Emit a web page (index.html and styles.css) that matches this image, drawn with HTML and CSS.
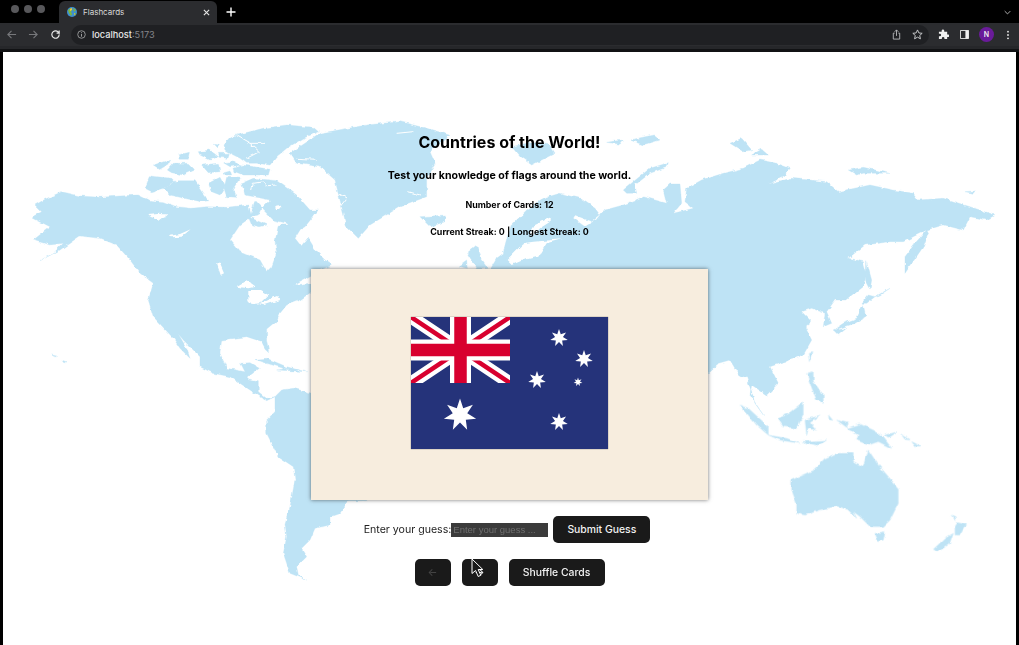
FILE: index.html
```html
<!DOCTYPE html>
<html lang="en">
<head>
<meta charset="utf-8">
<title>Flashcards</title>
<link rel="stylesheet" href="styles.css">
</head>
<body>
<header class="browser">
  <div class="tabstrip">
    <div class="lights"><i></i><i></i><i></i></div>
    <div class="tab">
      <svg class="fav" viewBox="0 0 10 10"><circle cx="5" cy="5" r="5" fill="#3f8fd0"/><path d="M1 3 4 1l1 2-1 2 1 2-1 2-2-3zM6 1l3 2-2 2zM7 6l2 0-1 3z" fill="#7fb53c"/><path d="M3 2 5 1 5 3 3 4zM7 6l1 1-1 1z" fill="#f0c93a"/></svg>
      <span class="tabtitle">Flashcards</span>
      <svg class="tabx" viewBox="0 0 8 8"><path d="M1 1 7 7M7 1 1 7" stroke="#e6e6e6" stroke-width="1.3"/></svg>
    </div>
    <svg class="plus" viewBox="0 0 10 10"><path d="M5 .5v9M.5 5h9" stroke="#fff" stroke-width="1.4"/></svg>
    <svg class="chev" viewBox="0 0 10 6"><path d="M1 1 5 5 9 1" fill="none" stroke="#ccc" stroke-width="1.2"/></svg>
  </div>
  <div class="toolbar">
    <svg class="tool" viewBox="0 0 12 12"><path d="M11 6H2M6 2 2 6l4 4" fill="none" stroke="#77787b" stroke-width="1.2"/></svg>
    <svg class="tool" viewBox="0 0 12 12"><path d="M1 6h9M6 2l4 4-4 4" fill="none" stroke="#77787b" stroke-width="1.2"/></svg>
    <svg class="tool" viewBox="0 0 12 12"><path d="M10 6a4 4 0 1 1-1.2-2.8L10 4.4V1.5M10 4.4H7.2" fill="none" stroke="#e8e8e8" stroke-width="1.3"/></svg>
    <div class="omnibox">
      <svg class="info" viewBox="0 0 10 10"><circle cx="5" cy="5" r="4.2" fill="none" stroke="#a8a9ab" stroke-width=".9"/><path d="M5 4.4v3M5 2.5v1" stroke="#a8a9ab" stroke-width="1"/></svg>
      <span class="host">localhost</span><span class="port">:5173</span>
      <div class="omni-end">
        <svg class="omni-icon" viewBox="0 0 10 12"><path d="M3 4.5H1.5v6.5h7V4.5H7M5 7.5V1M3 3l2-2 2 2" fill="none" stroke="#b8b9bb" stroke-width="1"/></svg>
        <svg class="omni-icon" viewBox="0 0 12 12"><path d="M6 1l1.5 3.3 3.6.4-2.7 2.4.8 3.6L6 8.9l-3.2 1.8.8-3.6L.9 4.7l3.6-.4z" fill="none" stroke="#d0d1d3" stroke-width="1"/></svg>
      </div>
    </div>
    <svg class="ext" viewBox="0 0 12 12"><path d="M1 3h3V2a1.4 1.4 0 0 1 2.8 0v1H10v3h1a1.4 1.4 0 0 1 0 2.8h-1V11H7V10a1.4 1.4 0 0 0-2.8 0v1H1V8h1a1.4 1.4 0 0 0 0-2.8H1z" fill="#f0f0f0"/></svg>
    <svg class="side" viewBox="0 0 10 10"><path d="M.5.5h9v9h-9z" fill="none" stroke="#f0f0f0" stroke-width="1"/><path d="M6 .5h3.5v9H6z" fill="#f0f0f0"/></svg>
    <div class="avatar">N</div>
    <svg class="dots" viewBox="0 0 4 12"><circle cx="2" cy="2" r="1.1" fill="#e8e8e8"/><circle cx="2" cy="6" r="1.1" fill="#e8e8e8"/><circle cx="2" cy="10" r="1.1" fill="#e8e8e8"/></svg>
  </div>
</header>

<main class="page">
  <svg class="map" viewBox="3 52 1013 593" aria-hidden="true">
    <defs>
      <filter id="coast" x="0" y="0" width="100%" height="100%" filterUnits="userSpaceOnUse" primitiveUnits="userSpaceOnUse">
        <feTurbulence type="fractalNoise" baseFrequency="0.16" numOctaves="2" seed="4"/>
        <feDisplacementMap in="SourceGraphic" scale="4" xChannelSelector="R" yChannelSelector="G"/>
      </filter>
    </defs>
    <g class="world">
    <g class="land" transform="translate(0 110) scale(.33333)">
      <!-- North America -->
      <polygon points="97,320 125,305 105,285 135,268 185,245 240,258 300,262 360,258 415,255 445,270 490,275 530,290 575,295 620,290 680,292 745,285 755,320 720,345 690,390 720,425 780,450 800,485 815,470 830,430 825,395 835,345 870,345 900,360 885,385 905,410 925,385 950,425 975,450 998,465 960,480 935,495 880,525 935,520 935,545 900,570 860,585 840,610 830,635 800,660 800,690 806,725 795,715 785,695 740,680 665,690 660,730 680,775 735,785 722,760 750,758 778,775 745,800 745,810 775,815 775,845 800,865 825,860 800,872 750,840 690,800 640,790 600,770 600,740 550,690 535,672 560,715 570,745 540,715 520,685 460,620 445,570 460,520 420,490 390,450 350,405 300,385 240,378 215,395 180,420 120,452 160,430 190,400 150,405 100,390 150,350 100,325"/>
      <polygon points="745,320 800,345 780,350 755,345"/>
      <!-- Greenland -->
      <polygon points="870,130 960,70 1100,45 1200,35 1280,55 1350,75 1290,125 1305,160 1280,200 1280,260 1200,290 1110,345 1075,385 1040,350 1020,270 1005,210 960,170 890,160"/>
      <polygon points="1260,320 1340,315 1335,335 1290,350"/>
      <!-- Britain -->
      <polygon points="1375,468 1400,450 1402,475"/>
      <polygon points="1400,430 1430,405 1440,440 1465,475 1430,478"/>
      <polygon points="1490,475 1510,440 1530,440 1530,480"/>
      <!-- Cuba etc -->
      <polygon points="765,748 800,745 860,770 895,780 850,775 800,760"/>
      <polygon points="830,780 870,775 920,785 870,782"/>
      <polygon points="155,735 170,738 165,741"/>
      <polygon points="185,750 198,755 192,759"/>
      <!-- South America -->
      <polygon points="825,860 845,840 880,835 935,850 1100,900 1100,1172 1045,1172 1020,1210 990,1220 990,1245 945,1255 930,1290 905,1315 920,1340 890,1370 895,1395 920,1410 870,1390 850,1330 860,1280 855,1240 870,1190 885,1110 880,1070 835,1040 800,970 800,930 825,905"/>
    </g>
    <g class="white" transform="translate(0 110) scale(.33333)">
      <polygon points="710,530 740,512 765,530 745,535"/>
      <polygon points="745,540 780,540 805,555 780,580 755,582 745,570"/>
      <polygon points="780,582 830,558 838,570 790,586"/>
      <polygon points="445,312 480,308 500,318 470,325 475,332 455,322"/>
      <polygon points="508,378 540,372 572,358 545,380 515,382"/>
      <polygon points="650,460 660,462 672,490 662,495"/>
      <polyline class="chan" points="890,145 950,148"/>
      <polyline class="chan" points="1190,70 1240,65"/>
      <polyline class="chan" points="1225,245 1260,255"/>
      <polyline class="chan" points="1015,250 1040,265 1020,290"/>
    </g>
    <!-- Arctic Canada -->
    <g class="land" transform="translate(130 120) scale(.33333)">
      <polygon points="282,75 300,55 320,45 400,25 470,15 550,22 565,35 520,55 470,85 440,110 420,135 380,130 350,130 330,115 300,100 285,90"/>
      <polygon points="70,135 125,118 120,130 90,148"/>
      <polygon points="145,105 178,97 175,118 148,118"/>
      <polygon points="112,150 130,130 175,130 195,150 160,165 125,158"/>
      <polygon points="205,95 240,90 265,110 240,120 210,105"/>
      <polygon points="265,100 295,100 290,115 270,112"/>
      <polygon points="215,135 265,130 270,155 235,158"/>
      <polygon points="280,128 305,125 335,135 300,140"/>
      <polygon points="312,145 340,135 420,148 415,165 340,165 315,155"/>
      <polygon points="282,155 300,150 305,165 285,165"/>
      <polygon points="250,70 265,72 260,80"/>
      <polygon points="45,205 60,168 125,175 135,185 100,205 65,215"/>
      <polygon points="100,205 145,182 195,182 218,215 238,242 210,245 150,232 120,225"/>
      <polygon points="235,190 270,172 285,200 270,225 245,215"/>
      <polygon points="290,172 330,175 310,205 320,232 290,230 282,205"/>
      <polygon points="335,190 370,175 440,182 500,225 540,270 565,270 525,320 500,335 470,310 430,300 395,265 420,240 380,232 345,225"/>
      <polygon points="375,240 395,262 385,285 360,290"/>
    </g>
    <g class="white" transform="translate(130 120) scale(.33333)">
      <polyline class="chan" points="320,47 360,70 405,70"/>
      <polyline class="chan" points="360,70 388,95 350,115"/>
      <polyline class="chan" points="365,210 370,190 400,185 412,197 440,195"/>
      <ellipse cx="445" cy="263" rx="9" ry="7"/>
      <polygon points="55,290 85,280 112,280 100,290 85,302 75,295"/>
    </g>
    <!-- Eurasia -->
    <g class="land" transform="translate(510 110) scale(.33333)">
      <polygon points="-60,480 -40,445 -20,430 -15,405 0,350 50,300 100,265 150,250 210,265 255,295 270,315 245,335 195,315 190,325 225,350 265,325 285,300 340,285 400,260 470,280 460,240 480,222 510,222 515,280 490,310 530,300 550,295 525,275 530,235 575,210 640,190 700,175 750,150 800,160 840,175 820,200 775,222 840,205 900,210 950,215 985,245 1080,225 1150,240 1210,250 1225,270 1300,265 1380,290 1455,315 1430,330 1380,320 1360,360 1300,345 1250,360 1180,395 1140,395 1065,405 1015,445 1060,455 1070,490 1060,530 1010,570 975,570 950,605 965,640 940,650 945,610 905,595 875,605 905,635 885,650 905,690 880,735 810,760 780,770 805,820 770,855 725,825 720,855 760,915 735,880 710,800 690,800 660,750 625,760 595,788 400,900 -100,900"/>
      <polygon points="1250,360 1215,400 1185,440 1185,490 1240,410 1255,370"/>
      <polygon points="340,240 370,215 420,175 475,158 470,172 420,190 375,225 380,250 350,250"/>
      <polygon points="5,110 70,95 120,105 135,130 65,165 30,140"/>
      <polygon points="660,100 695,85 725,120 700,125"/>
      <polygon points="725,135 755,118 775,135"/>
      <polygon points="1015,180 1060,172 1140,190 1060,190 1040,195"/>
      <polygon points="1365,245 1395,243 1390,250"/>
      <polygon points="290,97 340,90 330,103"/>
      <polygon points="360,90 430,75 450,90 400,105"/>
    </g>
    <g class="white" transform="translate(510 110) scale(.33333)">
      <polygon points="-10,450 40,400 70,395 155,388 110,400 85,440 40,450 5,465"/>
      <polygon points="60,370 75,345 125,320 125,332 90,355 70,378"/>
    </g>
    <!-- Far-east islands -->
    <g class="land" transform="translate(700 240) scale(.33333)">
      <polygon points="500,65 515,120 510,150 497,125"/>
      <polygon points="485,190 505,165 525,170 500,190"/>
      <polygon points="490,195 498,230 465,250 420,265 400,270 430,250 470,235"/>
      <polygon points="400,270 415,285 440,265 410,270"/>
      <polygon points="525,170 570,145 540,165"/>
    </g>
    <!-- SE Asia and Oceania -->
    <g class="land" transform="translate(640 340) scale(.33333)">
      <polygon points="455,420 520,390 555,355 590,340 640,340 640,365 670,380 685,330 715,375 745,410 775,445 775,490 750,540 730,560 690,560 660,530 640,515 650,535 625,510 590,498 540,510 495,525 470,520 470,490 455,450"/>
      <polygon points="705,580 735,575 730,600 715,605"/>
      <polygon points="880,628 915,595 940,580 930,610 895,635"/>
      <polygon points="945,560 955,545 980,550 960,585 945,585"/>
      <polygon points="933,525 945,530 948,542"/>
      <polygon points="620,265 660,252 700,270 725,285 755,325 715,305 685,315 650,300 655,285"/>
      <polygon points="300,195 325,205 385,260 385,285 350,255 325,225"/>
      <polygon points="385,285 440,295 480,310 420,300"/>
      <polygon points="490,305 560,300 530,318 500,312"/>
      <polygon points="413,235 445,220 490,185 490,225 470,265 430,260"/>
      <polygon points="495,240 540,225 510,245 530,270 505,265 500,285"/>
      <polygon points="500,100 520,95 520,125 550,165 550,190 530,180 510,130"/>
      <polygon points="505,40 516,38 508,62"/>
      <polygon points="735,285 770,275 745,292"/>
      <polygon points="785,285 810,300 795,298"/>
      <polygon points="815,305 842,318 825,318"/>
      <polygon points="565,225 578,240 568,240"/>
      <polygon points="590,240 625,250 620,262"/>
    </g>
    </g>
  </svg>

  <div class="content">
    <h1 class="title">Countries of the World!</h1>
    <h2 class="subtitle">Test your knowledge of flags around the world.</h2>
    <h3 class="stat">Number of Cards: 12</h3>
    <h3 class="stat streak">Current Streak: 0 | Longest Streak: 0</h3>

    <div class="card">
      <svg class="flag" viewBox="0 0 197 132">
        <defs>
          <clipPath id="canton"><rect width="99" height="66"/></clipPath>
          <polygon id="star" points="0,-1 .195,-.405 .782,-.623 .439,-.1 .975,.223 .352,.281 .434,.901 0,.45 -.434,.901 -.352,.281 -.975,.223 -.439,-.1 -.782,-.623 -.195,-.405"/>
        </defs>
        <rect width="197" height="132" fill="#25337a"/>
        <g clip-path="url(#canton)">
          <path d="M0 0 99 66M99 0 0 66" stroke="#fff" stroke-width="13"/>
          <path d="M0 0 99 66M99 0 0 66" stroke="#d8002f" stroke-width="4.5"/>
          <path d="M49.5 0v66M0 33h99" stroke="#fff" stroke-width="21"/>
          <path d="M49.5 0v66M0 33h99" stroke="#d8002f" stroke-width="12.5"/>
        </g>
        <g fill="#fff">
          <use href="#star" transform="translate(49 98) scale(16.5)"/>
          <use href="#star" transform="translate(148 21) scale(9)"/>
          <use href="#star" transform="translate(173 42) scale(9)"/>
          <use href="#star" transform="translate(126 63) scale(9)"/>
          <use href="#star" transform="translate(167 65) scale(4.5)"/>
          <use href="#star" transform="translate(148 105) scale(9)"/>
        </g>
      </svg>
    </div>

    <form class="guess">
      <label class="guess-label" for="guess">Enter your guess:</label>
      <input class="guess-input" id="guess" type="text" placeholder="Enter your guess ...">
      <button class="btn submit" type="button">Submit Guess</button>
    </form>

    <div class="nav">
      <button class="btn square prev" type="button">←</button>
      <button class="btn square" type="button">→</button>
      <button class="btn shuffle" type="button">Shuffle Cards</button>
      <svg class="cursor" viewBox="0 0 15 20"><path d="M1 1v14.5l3.6-3 2.6 6 2.6-1.2-2.6-5.8h4.6z" fill="#1a1a1a" stroke="#fff" stroke-width="1"/></svg>
    </div>
  </div>
</main>
</body>
</html>
```
FILE: styles.css
```css
* { box-sizing: border-box; }
html, body { margin: 0; height: 100%; }
body {
  background: #000;
  font-family: Inter, "Liberation Sans", sans-serif;
  overflow: hidden;
  height: 645px;
  display: flex;
  flex-direction: column;
}

/* Browser chrome */
.browser { height: 52px; flex: none; background: #000; color: #e8e8e8; }
.tabstrip { height: 23px; display: flex; align-items: flex-end; position: relative; }
.lights { display: flex; gap: 5px; padding: 0 0 10px 11px; width: 59px; align-self: flex-end; }
.lights i { width: 8px; height: 8px; border-radius: 50%; background: #58585b; display: block; }
.tab {
  width: 158px; height: 22px; background: #2b2c2f;
  border-radius: 6px 6px 0 0;
  display: flex; align-items: center; padding: 0 7px 0 8px;
}
.fav { width: 10px; height: 10px; }
.tabtitle { margin-left: 6px; font: 8px Inter, "Liberation Sans", sans-serif; color: #d8d8d8; flex: 1; }
.tabx { width: 7px; height: 7px; }
.plus { width: 10px; height: 10px; margin: 0 0 6px 9px; }
.chev { width: 7px; height: 5px; position: absolute; right: 8px; top: 10px; }

.toolbar {
  height: 23px; background: #2b2c2f;
  display: flex; align-items: center; padding: 0 9px 0 6px;
  box-shadow: 0 3px 0 #26272a, 0 6px 0 #111214;
}
.tool { width: 11px; height: 11px; margin-right: 11px; flex: none; }
.tool:nth-child(3) { margin-right: 10px; }
.omnibox {
  height: 20px; width: 858px; margin-right: 9px; border-radius: 10px; background: #1f2023;
  display: flex; align-items: center; padding: 0 6px 0 6px; flex: none;
}
.info { width: 9px; height: 9px; margin-right: 6px; }
.host { font-size: 9.2px; font-weight: 500; color: #e8e8e8; }
.port { font-size: 9.2px; color: #85868a; }
.omni-end { margin-left: auto; display: flex; align-items: center; gap: 10px; }
.omni-icon { width: 11px; height: 11px; }
.ext { width: 11px; height: 11px; }
.side { width: 9px; height: 9px; margin-left: 11px; }
.avatar {
  width: 15px; height: 15px; border-radius: 50%; margin-left: 10px;
  background: #6a1b9a; color: #eee; font-size: 7px; font-weight: 600;
  display: flex; align-items: center; justify-content: center;
}
.dots { width: 4px; height: 10px; margin-left: 12px; }

/* Page */
.page { position: relative; flex: 1; background: #fff; margin: 0 3px; overflow: hidden; color: #000; }
.map { position: absolute; inset: 0; width: 100%; height: 100%; }
.world { filter: url(#coast); }
.land { fill: #bee3f5; stroke: #bee3f5; stroke-width: 1; stroke-linejoin: round; }
.white { fill: #fff; }
.chan { fill: none; stroke: #fff; stroke-width: 3; }

.content { position: relative; display: flex; flex-direction: column; align-items: center; padding-top: 79px; }
.title { margin: 0; font-size: 16px; line-height: 22px; font-weight: 700; }
.subtitle { margin: 16px 0 0; font-size: 10.6px; line-height: 14px; font-weight: 700; }
.stat { margin: 16px 0 0; font-size: 8.9px; line-height: 12px; font-weight: 700; }
.streak { margin-top: 15px; }

.card {
  margin-top: 31px; width: 397px; height: 231px; background: #f7edde;
  box-shadow: 0 0 4px rgba(0, 0, 0, .55);
  display: flex; align-items: center; justify-content: center; padding-bottom: 4px;
}
.flag { width: 197px; height: 132px; box-shadow: 0 0 1px rgba(0,0,0,.6); }

.guess { margin-top: 16px; display: flex; align-items: center; padding-right: 5px; height: 27px; }
.guess-label { font-size: 10.6px; color: #222; }
.guess-input {
  width: 97px; height: 14px; border: 0; padding: 0 2px; border-radius: 0;
  background: #3b3b3b; color: #ddd; font: 9.5px "Liberation Sans", sans-serif;
}
.guess-input::placeholder { color: #6f6f6f; opacity: 1; }
.btn {
  height: 27px; border: 0; border-radius: 5px; background: #1a1a1a; color: #f2f2f2;
  font: 500 10.4px Inter, "Liberation Sans", sans-serif; padding: 0; 
}
.submit { width: 97px; margin-left: 5px; }
.nav { position: relative; margin-top: 16px; display: flex; gap: 11px; }
.square { width: 36px; }
.prev { color: #444; }
.shuffle { width: 96px; }
.cursor { position: absolute; left: 56px; top: -1px; width: 15px; height: 20px; }
```
